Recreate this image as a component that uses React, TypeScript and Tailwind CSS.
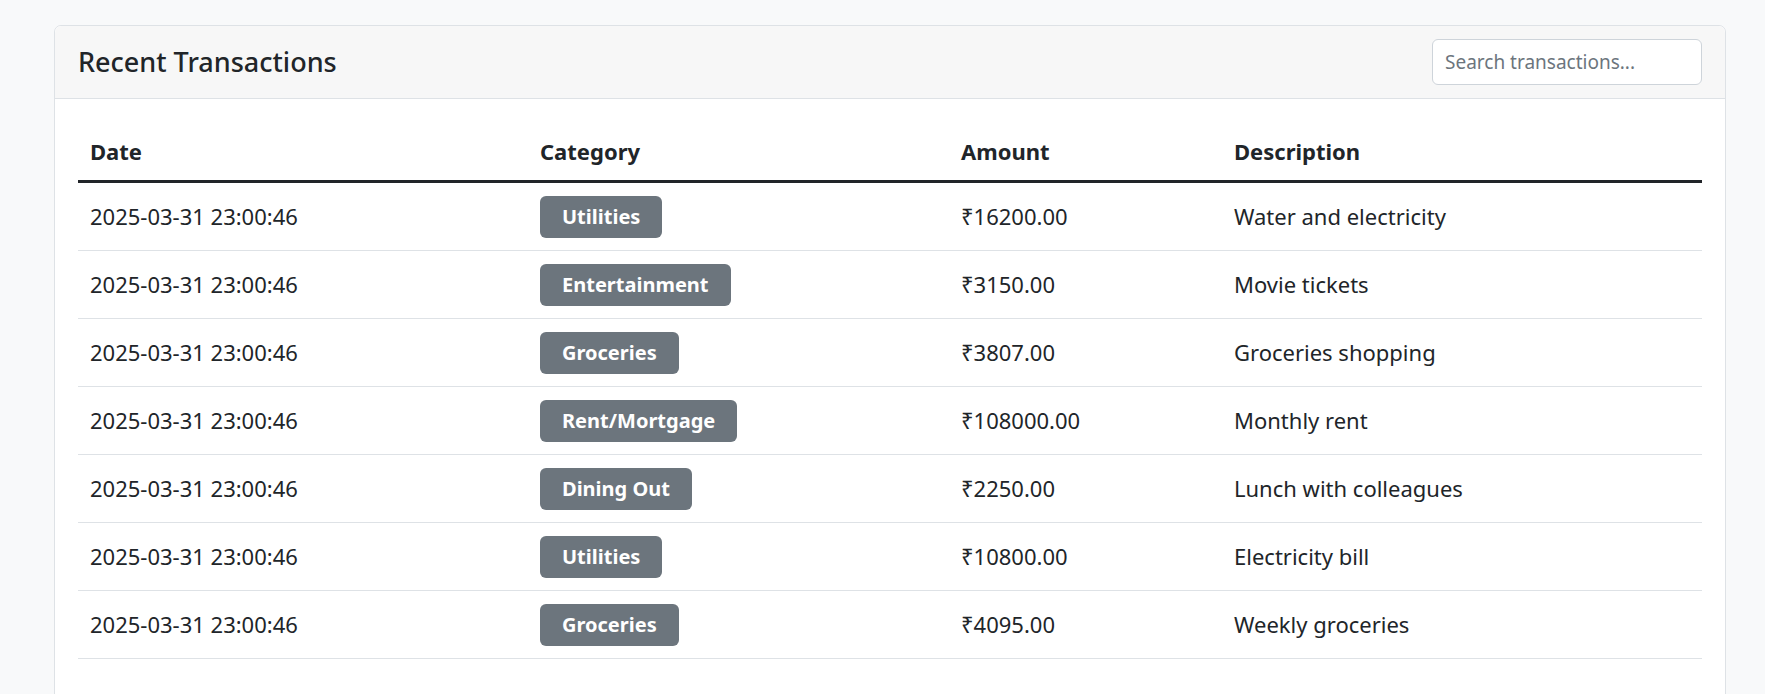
const rows = [
  { cat: "Utilities", amt: "16200.00", desc: "Water and electricity" },
  { cat: "Entertainment", amt: "3150.00", desc: "Movie tickets" },
  { cat: "Groceries", amt: "3807.00", desc: "Groceries shopping" },
  { cat: "Rent/Mortgage", amt: "108000.00", desc: "Monthly rent" },
  { cat: "Dining Out", amt: "2250.00", desc: "Lunch with colleagues" },
  { cat: "Utilities", amt: "10800.00", desc: "Electricity bill" },
  { cat: "Groceries", amt: "4095.00", desc: "Weekly groceries" },
];

const cols = "grid grid-cols-[450px_421px_273px_1fr]";

export default function App() {
  return (
    <div
      className="min-h-[694px] bg-[#f8f9fa] pl-[54px] pr-[39px] pt-[25px] text-[#212529]"
      style={{ fontFamily: '"Noto Sans", "Open Sans", sans-serif' }}
    >
      <div className="rounded-[7px] border border-[#dee2e6] bg-white h-[700px]">
        <div className="flex h-[73px] items-center justify-between rounded-t-[7px] border-b border-[#dee2e6] bg-[#f7f7f7] px-[23px]">
          <h2 className="text-[27px] font-medium">Recent Transactions</h2>
          <input
            placeholder="Search transactions..."
            className="h-[46px] w-[270px] rounded-[6px] border border-[#ced4da] bg-white px-[12px] text-[19px] placeholder:text-[#6c757d] outline-none"
          />
        </div>
        <div className="px-[23px] pt-[24px]">
          <div className={`${cols} h-[60px] items-center border-b-[3px] border-[#212529] text-[22px] font-bold`}>
            <div className="pl-[12px]">Date</div>
            <div className="pl-[12px]">Category</div>
            <div className="pl-[12px]">Amount</div>
            <div className="pl-[12px]">Description</div>
          </div>
          {rows.map((r, i) => (
            <div key={i} className={`${cols} h-[68px] items-center border-b border-[#dee2e6] text-[22px]`}>
              <div className="pl-[12px]">2025-03-31 23:00:46</div>
              <div className="pl-[12px]">
                <span className="inline-block rounded-[6px] bg-[#6c757d] px-[22px] py-[6px] text-[20px] font-bold text-white">
                  {r.cat}
                </span>
              </div>
              <div className="pl-[12px]">₹{r.amt}</div>
              <div className="pl-[12px]">{r.desc}</div>
            </div>
          ))}
        </div>
      </div>
    </div>
  );
}
